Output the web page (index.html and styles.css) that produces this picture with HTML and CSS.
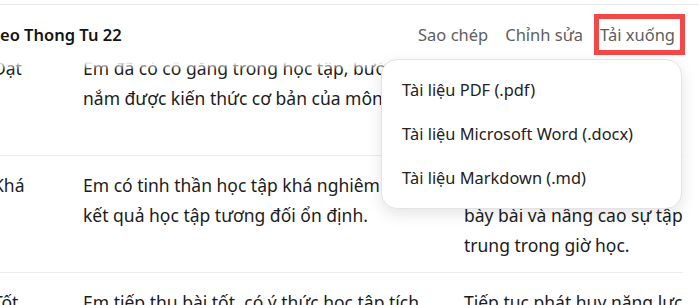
FILE: index.html
```html
<!DOCTYPE html>
<html lang="vi">
<head>
<meta charset="utf-8">
<title>Nhận xét theo Thong Tu 22</title>
<link rel="stylesheet" href="styles.css">
</head>
<body>
<div class="page">
  <div class="table">
    <div class="row">
      <div class="cell c1">Đạt</div>
      <div class="cell c2">Em đã có cố gắng trong học tập, bước đầu<br>nắm được kiến thức cơ bản của môn học.</div>
      <div class="cell c3">Cần chăm chỉ luyện<br>tập thêm để củng cố<br>kiến thức đã học.</div>
    </div>
    <div class="row">
      <div class="cell c1">Khá</div>
      <div class="cell c2">Em có tinh thần học tập khá nghiêm túc,<br>kết quả học tập tương đối ổn định.</div>
      <div class="cell c3">Cần tự tin hơn khi trình<br>bày bài và nâng cao sự tập<br>trung trong giờ học.</div>
    </div>
    <div class="row">
      <div class="cell c1">Tốt</div>
      <div class="cell c2">Em tiếp thu bài tốt, có ý thức học tập tích<br>cực và hoàn thành tốt các nhiệm vụ.</div>
      <div class="cell c3">Tiếp tục phát huy năng lực<br>học tập của bản thân.</div>
    </div>
  </div>

  <header class="bar">
    <h1 class="title">eo Thong Tu 22</h1>
    <nav class="actions">
      <button class="action">Sao chép</button>
      <button class="action">Chỉnh sửa</button>
      <button class="action active">Tải xuống</button>
    </nav>
  </header>

  <div class="menu">
    <div class="item">Tài liệu PDF (.pdf)</div>
    <div class="item">Tài liệu Microsoft Word (.docx)</div>
    <div class="item">Tài liệu Markdown (.md)</div>
  </div>
</div>
</body>
</html>
```
FILE: styles.css
```css
html, body {
  margin: 0;
  padding: 0;
  background: #ffffff;
}
body {
  width: 699px;
  height: 305px;
  overflow: hidden;
  font-family: "Noto Sans", "Open Sans", sans-serif;
  color: #1c1c1c;
}
.page {
  position: relative;
  width: 699px;
  height: 305px;
  overflow: hidden;
}

/* table */
.table {
  margin-left: -23px;
  width: 706px;
  padding-top: 39px;
}
.row {
  display: grid;
  grid-template-columns: 90px 381px 1fr;
  border-bottom: 1px solid #ececec;
}
.cell {
  padding: 14px 16px 12px;
  font-size: 17.5px;
  line-height: 30px;
  white-space: nowrap;
}

/* header bar */
.bar {
  position: absolute;
  top: 4px;
  left: 0;
  right: 0;
  height: 55px;
  background: #ffffff;
  border-top: 1px solid #e9e9e9;
  display: flex;
  align-items: center;
  justify-content: space-between;
  padding-top: 2px;
}
.bar::after {
  content: "";
  position: absolute;
  left: 0;
  right: 0;
  top: 100%;
  height: 8px;
  background: linear-gradient(#ffffff, rgba(255, 255, 255, 0));
}
.title {
  margin: 0;
  font-size: 16.5px;
  font-weight: 600;
  color: #141414;
}
.actions {
  display: flex;
  gap: 17px;
  margin-right: 24px;
}
.action {
  position: relative;
  border: 0;
  background: none;
  padding: 0;
  font-family: inherit;
  font-size: 16.5px;
  color: #5e5e5e;
}
.action.active::after {
  content: "";
  position: absolute;
  left: -6px;
  right: -10px;
  top: -9px;
  bottom: -9px;
  border: 5px solid #f24848;
}

/* dropdown */
.menu {
  position: absolute;
  top: 59px;
  right: 17px;
  width: 299px;
  height: 140px;
  padding-top: 8px;
  background: #ffffff;
  border: 1px solid #e3e3e3;
  border-radius: 16px;
  box-shadow: 0 5px 16px rgba(0, 0, 0, 0.11);
}
.item {
  height: 44px;
  line-height: 44px;
  padding-left: 20px;
  font-size: 16.4px;
  color: #222222;
}
```
